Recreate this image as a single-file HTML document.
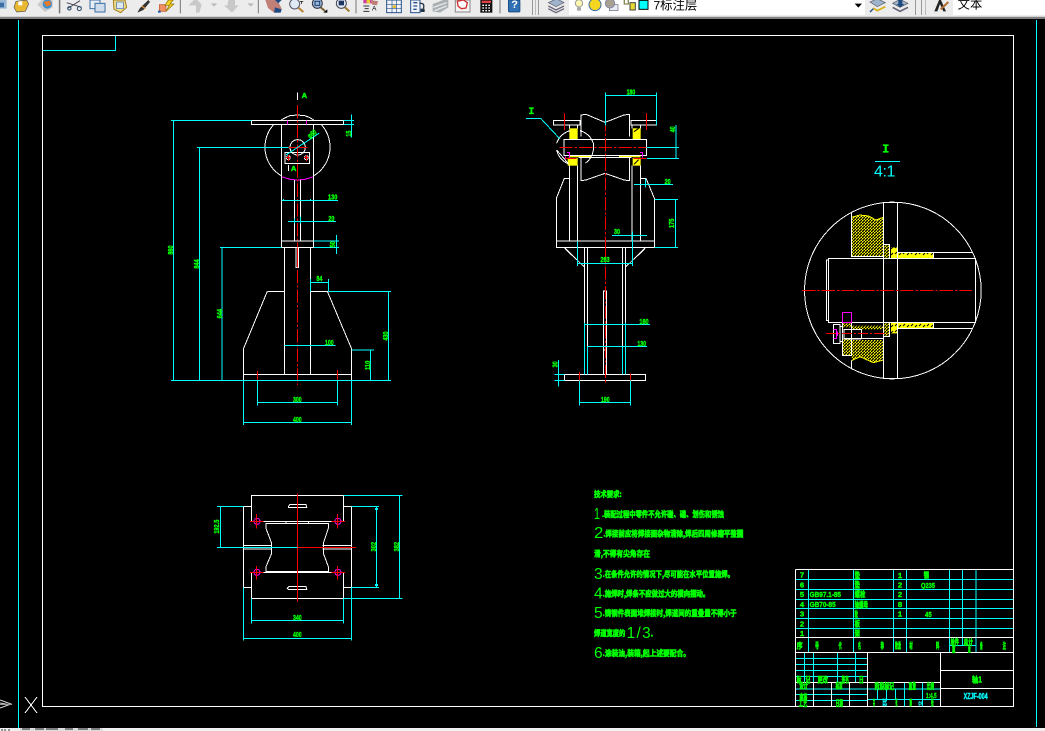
<!DOCTYPE html>
<html><head><meta charset="utf-8"><style>
html,body{margin:0;padding:0;background:#000;width:1045px;height:731px;overflow:hidden}
svg{position:absolute;left:0;top:0;display:block}
.l{fill:none;stroke-width:3;shape-rendering:crispEdges}
.w{stroke:#fff}.c{stroke:#0ff}.r{stroke:#f00}.m{stroke:#f0f}.y{stroke:#ff0}
.d{stroke-dasharray:40 6 7 6}
text{font-family:"Liberation Sans","Noto Sans CJK SC",sans-serif;font-weight:700;fill:#0f0;stroke:#0f0;stroke-width:1.2;font-size:23px;dominant-baseline:central;text-anchor:middle}
.cj{text-anchor:start;font-size:24px;stroke-width:1.8;font-family:"Noto Sans CJK SC","Liberation Sans",sans-serif}
.big{font-family:"Liberation Sans",sans-serif;font-weight:400;font-size:46px;text-anchor:start;stroke:none}
.tb{font-family:"Liberation Sans","Noto Sans CJK SC",sans-serif;font-weight:400;fill:#000;stroke:none;font-size:13px;text-anchor:start}
.ser{font-family:"Liberation Mono",monospace;stroke-width:.6}
</style></head><body>
<svg width="1045" height="731" viewBox="0 0 1045 731" xmlns="http://www.w3.org/2000/svg">
<defs>
<pattern id="h" patternUnits="userSpaceOnUse" width="9" height="9"><rect width="9" height="9" fill="#ff0"/><path d="M-2 11L11 -2" stroke="#000" stroke-width="4.5"/></pattern>
<pattern id="h2" patternUnits="userSpaceOnUse" width="24" height="18"><rect width="24" height="18" fill="#ff0"/><path d="M3 12L9 6M15 15L21 9" stroke="#000" stroke-width="3"/></pattern>
</defs>
<rect width="1045" height="731" fill="#000"/>

<!-- toolbar -->
<rect width="1045" height="16" fill="#ececec"/>
<rect y="16" width="1045" height="1" fill="#d4d4d4"/>
<rect y="17" width="1045" height="2" fill="#808080"/>
<g transform="scale(.33333)">
<rect x="0" y="0" width="20" height="26" fill="#9db8d6"/><rect x="0" y="8" width="12" height="14" fill="#3a6ea5"/>
<path d="M48 4L80 0L86 12L76 34L50 36L42 22Z" fill="#e8b830" stroke="#555" stroke-width="2"/><rect x="55" y="4" width="12" height="12" fill="#fff"/>
<path d="M112 14L135 36L158 22L158 0L125 0Z" fill="#c9c9c9"/><circle cx="142" cy="12" r="14" fill="#3a8fd0"/><path d="M130 6L150 2L154 14L140 20Z" fill="#e57a2a"/>
<path d="M200 8L245 22M205 24L240 2" stroke="#445" stroke-width="3"/><circle cx="208" cy="25" r="5" fill="none" stroke="#246" stroke-width="3"/><circle cx="238" cy="26" r="6" fill="none" stroke="#246" stroke-width="3"/>
<rect x="270" y="0" width="30" height="26" fill="#e8eef5" stroke="#3a6ea5" stroke-width="3"/><rect x="285" y="10" width="30" height="26" fill="#cfdcec" stroke="#3a6ea5" stroke-width="3"/>
<path d="M340 0H375L380 22L362 38L342 28Z" fill="#f1d98a" stroke="#a08020" stroke-width="3"/><rect x="350" y="6" width="20" height="20" fill="#dce7f3" stroke="#3a6ea5" stroke-width="2"/>
<path d="M445 0L420 24L412 38L430 30L450 6Z" fill="#333"/><path d="M425 18L436 26" stroke="#e0903a" stroke-width="4"/>
<rect x="478" y="14" width="20" height="20" fill="#f09060" stroke="#c05020" stroke-width="2"/><path d="M505 0L495 16H508L498 34L522 12H510L520 0Z" fill="#f2d020" stroke="#8a7000" stroke-width="2"/><rect x="474" y="32" width="8" height="6" fill="#1c5db0"/>
<path d="M582 0L565 16L588 16L588 38H598L605 14L592 0Z" fill="#c8c8c8"/><path d="M632 10H652L642 20Z" fill="#bbb"/>
<path d="M685 0L682 16L672 16L696 38L716 16L705 16L705 0Z" fill="#c8c8c8"/><path d="M742 10H762L752 20Z" fill="#bbb"/>
<path d="M796 0L832 0L845 26L840 38L822 38L804 24Z" fill="#c08078"/><path d="M825 22L845 28L842 38L822 38Z" fill="#1d4a80"/><path d="M825 0L845 0L835 10Z" fill="#1d4a80"/>
<circle cx="884" cy="12" r="15" fill="#dfe9f3" stroke="#556" stroke-width="3"/><path d="M895 23L910 36" stroke="#b88030" stroke-width="6"/><path d="M900 4L910 4M905 4V12" stroke="#000" stroke-width="2"/>
<circle cx="952" cy="10" r="15" fill="#9db8d6" stroke="#334" stroke-width="3"/><rect x="945" y="4" width="14" height="12" fill="none" stroke="#1c3c70" stroke-width="3"/><path d="M962 22L975 33" stroke="#7a6030" stroke-width="6"/><path d="M970 38L982 38L982 28Z" fill="#000"/>
<circle cx="1024" cy="10" r="15" fill="#dfe9f3" stroke="#445" stroke-width="3"/><rect x="1016" y="2" width="16" height="14" fill="#1d3560"/><path d="M1035 22L1048 34" stroke="#a07830" stroke-width="6"/>
<rect x="1090" y="0" width="28" height="10" fill="#d040a0"/><rect x="1100" y="0" width="10" height="10" fill="#e8d030"/><path d="M1112 0L1135 4L1130 16L1116 14Z" fill="#c08078"/><path d="M1090 18H1108M1094 26H1106M1090 34H1108" stroke="#333" stroke-width="3"/><text class="tb" x="1116" y="27" style="font-size:20px">A</text>
<rect x="1160" y="0" width="44" height="38" fill="#f0f4f8" stroke="#27518c" stroke-width="3"/><path d="M1176 0V38M1190 0V38M1160 14H1204M1160 26H1204" stroke="#27518c" stroke-width="2"/><rect x="1178" y="16" width="10" height="8" fill="#e8c030"/>
<rect x="1232" y="0" width="28" height="38" fill="#f0f4f8" stroke="#27518c" stroke-width="3"/><path d="M1240 8H1252M1240 18H1252M1240 28H1250" stroke="#27518c" stroke-width="4"/><path d="M1258 10Q1276 8 1270 26" fill="none" stroke="#234" stroke-width="4"/><rect x="1262" y="26" width="12" height="10" fill="#234"/>
<path d="M1298 12L1330 0L1345 0V22L1320 38L1298 34Z" fill="#a8b0b4"/><path d="M1300 22L1340 8M1304 32L1340 18" stroke="#e8e8e8" stroke-width="4"/>
<rect x="1366" y="0" width="44" height="36" fill="#f4f4f4" stroke="#888" stroke-width="3"/><path d="M1372 4L1390 0L1402 8L1398 24L1384 26L1374 18Z" fill="#fff" stroke="#d03030" stroke-width="4"/>
<rect x="1441" y="0" width="36" height="38" fill="#111"/><rect x="1445" y="2" width="28" height="7" fill="#e04040"/><path d="M1447 14h5v4h-5zM1456 14h5v4h-5zM1465 14h5v4h-5zM1447 22h5v4h-5zM1456 22h5v4h-5zM1465 22h5v4h-5zM1447 30h5v4h-5zM1456 30h5v4h-5zM1465 30h5v4h-5z" fill="#fff"/>
<rect x="1525" y="0" width="35" height="36" rx="3" fill="#2f6fb3" stroke="#123f78" stroke-width="2"/><text class="tb" x="1534" y="15" style="fill:#fff;font-size:32px;font-weight:700">?</text>
<path d="M178 0V40M179.500 0V40M541 0V40M775 0V40M1068 0V40M1500 0V40" stroke="#777" stroke-width="3"/>
</g>
<g>
<rect x="569" y="0" width="296" height="15" fill="#fff"/><rect x="953" y="0" width="92" height="15" fill="#fff"/>
<rect x="532" y="0" width="1" height="15" fill="#999"/><rect x="535" y="0" width="1" height="15" fill="#bbb"/><rect x="538" y="0" width="1" height="15" fill="#999"/>
<rect x="915" y="0" width="1" height="15" fill="#999"/><rect x="921" y="0" width="1" height="15" fill="#999"/><rect x="925" y="0" width="1" height="15" fill="#bbb"/>
</g>
<g transform="translate(520,0) scale(.33333)">
<path d="M85 8L110 -4L132 8L108 20Z" fill="#9db4cb" stroke="#556" stroke-width="2"/><path d="M85 18L108 30L132 18M85 26L108 38L132 26" fill="none" stroke="#667" stroke-width="4"/>
<circle cx="177" cy="10" r="11" fill="#fff8b0" stroke="#999" stroke-width="3"/><rect x="171" y="22" width="12" height="10" fill="#aaa"/>
<circle cx="225" cy="14" r="18" fill="#f4d520" stroke="#3a6ea5" stroke-width="3"/>
<rect x="268" y="14" width="26" height="18" fill="#e8eef5" stroke="#667" stroke-width="2"/><circle cx="270" cy="10" r="14" fill="#a8a090" stroke="#88a" stroke-width="3"/>
<rect x="330" y="8" width="16" height="22" fill="#e8d830" stroke="#444" stroke-width="3"/><path d="M313 0V12H325V0" fill="none" stroke="#885" stroke-width="4"/>
<rect x="357" y="1" width="27" height="27" fill="#0ff" stroke="#000" stroke-width="3"/>
<path d="M1004 11H1026L1015 23Z" fill="#000"/>
<path d="M1050 6L1072 -4L1096 8L1072 20Z" fill="#9db4cb" stroke="#556" stroke-width="2"/><path d="M1060 24L1072 32L1096 20" fill="none" stroke="#d4b010" stroke-width="5"/><path d="M1050 36L1060 26" stroke="#1d4a80" stroke-width="4"/>
<path d="M1118 10L1140 -2L1164 10L1140 22Z" fill="#9db4cb" stroke="#556" stroke-width="2"/><path d="M1118 22L1140 34L1164 22" fill="none" stroke="#667" stroke-width="5"/><path d="M1135 0H1147V12H1153L1141 22L1129 12H1135Z" fill="#1d4a80"/>
<path d="M1243 34L1258 -2H1262L1278 34H1270L1260 12L1252 34Z" fill="#222"/><path d="M1262 28L1285 6" stroke="#b07030" stroke-width="6"/>
<text class="tb" x="400" y="16" style="font-size:37px">7标注层</text>
<text class="tb" x="1313" y="14" style="font-size:37px">文本</text>
</g>

<!-- drawing frame -->
<path class="l c" style="stroke-width:1" d="M18.500 20V731M1036.500 20V727"/>
<path class="l w" style="stroke-width:1" d="M42.500 35.500H1013.500V706.500H42.500Z"/>
<path class="l c" style="stroke-width:1" d="M43 50.500H115.500V36"/>
<path class="l w" style="stroke-width:1" d="M25 713L37 697M25 697L37 713"/>
<path d="M0 700L11 704L0 708M0 703L8 704.500" fill="none" stroke="#ddd" stroke-width="1"/>
<rect x="0" y="704" width="12" height="1" fill="#999"/>
<rect x="0" y="728" width="1045" height="3" fill="#f0f0f0"/>
<rect x="20" y="728" width="83" height="3" fill="#ddd"/>
<path d="M22 729H30M35 729H44M46 729H58M65 729H73M78 729H88M91 729H100" stroke="#222" stroke-width="1"/>
<path d="M2 729V731M5 729V731M9 729V731" stroke="#333" stroke-width="1"/>

<!-- A: front view top (zoom coords) -->
<g transform="translate(160,85) scale(.33333)">
<rect class="l w" x="274" y="106" width="276" height="13"/>
<path class="l w" d="M363 105L378 97L390 92L412 90L434 92L448 97L461 105"/>
<path class="l w" d="M340 120A100 100 0 0 0 365 273M485 120A100 100 0 0 1 460 273"/>
<path class="l m" d="M365 275L390 283L412 285L435 283L460 275M382 106V119M439 106V119"/>
<path class="l w" d="M364 119V487M461 119V487M404 285V468M421 285V468M364 468H461M364 487H461"/>
<circle class="l w" cx="413" cy="187" r="23"/>
<rect class="l w" x="375" y="202" width="74" height="34"/>
<circle class="l w" cx="385" cy="218" r="6"/><circle class="l w" cx="439" cy="218" r="6"/>
<path class="l r" d="M385 210V228M439 210V228M378 218H392M432 218H446"/>
<path class="l w" d="M385 240V258M412 22V45"/>
<path class="l r" d="M385 187H442"/>
<path class="l r d" d="M412 60V540"/>
<path class="l c" d="M33 106H274M550 106H582M550 119H582M574 88V158M40 106V545M111 187H385M118 187V545M180 487H364M186 487V545M364 346H534M384 409H528M403 400V415M422 395V415M461 468H537M461 487H537M529 450V507M378 210L477 145M370 342V346M452 342V346"/>
<text x="518" y="336" textLength="28" lengthAdjust="spacingAndGlyphs">130</text>
<text x="514" y="401" textLength="18" lengthAdjust="spacingAndGlyphs">20</text>
<text x="566" y="146" textLength="18" lengthAdjust="spacingAndGlyphs" transform="rotate(-90 566 146)">15</text>
<text x="518" y="478" textLength="18" lengthAdjust="spacingAndGlyphs" transform="rotate(-90 518 478)">50</text>
<text x="32" y="495" textLength="28" lengthAdjust="spacingAndGlyphs" transform="rotate(-90 32 495)">860</text>
<text x="433" y="32">A</text>
<text x="401" y="251">A</text>
<text x="456" y="147" textLength="28" lengthAdjust="spacingAndGlyphs" transform="rotate(-35 456 147)">φ60</text>
</g>

<!-- B: front view bottom -->
<g transform="translate(160,250) scale(.33333)">
<path class="l w" d="M373 -8V373M451 -8V373M322 124H373M452 124H502M322 124L250 297V373M502 124L575 297V373"/>
<rect class="l w" x="250" y="373" width="325" height="18"/>
<rect class="l w" x="408" y="-8" width="8" height="61"/>
<path class="l r" d="M412 -8V53M292 363V391M532 360V391"/>
<path class="l r d" d="M412 60V405"/>
<path class="l c" d="M33 391H693M40 0V391M118 0V391M186 0V391M505 124H693M685 124V391M451 97H505M451 87V124M505 87V124M373 287H527M575 300H642M632 300V391M292 391V467M532 391V467M292 457H532M250 391V525M575 391V525M250 517H575"/>
<text x="478" y="86" textLength="18" lengthAdjust="spacingAndGlyphs">84</text>
<text x="508" y="278" textLength="26" lengthAdjust="spacingAndGlyphs">100</text>
<text x="623" y="346" textLength="28" lengthAdjust="spacingAndGlyphs" transform="rotate(-90 623 346)">110</text>
<text x="677" y="258" textLength="28" lengthAdjust="spacingAndGlyphs" transform="rotate(-90 677 258)">430</text>
<text x="412" y="449" textLength="26" lengthAdjust="spacingAndGlyphs">300</text>
<text x="412" y="509" textLength="26" lengthAdjust="spacingAndGlyphs">400</text>
<text x="110" y="42" textLength="28" lengthAdjust="spacingAndGlyphs" transform="rotate(-90 110 42)">844</text>
<text x="178" y="191" textLength="28" lengthAdjust="spacingAndGlyphs" transform="rotate(-90 178 191)">644</text>
</g>

<!-- C: side view top -->
<g transform="translate(520,85) scale(.33333)">
<rect x="148" y="130" width="25" height="32" fill="#ff0"/><rect x="338" y="130" width="24" height="32" fill="#ff0"/>
<rect x="143" y="218" width="30" height="24" fill="#ff0"/><rect x="338" y="218" width="24" height="24" fill="#ff0"/>
<path d="M342 140L356 130M342 238L356 224" stroke="#000" stroke-width="3"/>
<path class="l y" d="M150 215H215M297 215H362"/>
<rect class="l w" x="100" y="106" width="80" height="14"/><rect class="l w" x="333" y="106" width="77" height="14"/>
<path class="l w" d="M183 155V90L198 88L255 112L312 90L329 88V155M183 218V287L198 285L255 265L312 285L329 287V218"/>
<rect class="l w" x="132" y="163" width="248" height="49"/>
<path class="l w" d="M175 218H335"/>
<path class="l w" d="M148 120V130M173 120V130M336 120V130M362 120V130M148 242V468M173 242V468M336 242V468M362 242V468M148 280H133L109 340V487M362 280H378L403 340V487"/>
<rect class="l w" x="109" y="468" width="294" height="19"/>
<path class="l w" d="M135 490L155 510M375 490L355 510M194 487V510M203 487V510M307 487V510M317 487V510"/>
<path class="l w" d="M110 175A58 58 0 0 1 150 137M180 137A58 58 0 0 1 220 175V195A58 58 0 0 1 196 235M146 237A58 58 0 0 1 110 195Z"/>
<path class="l m" d="M141 202H149V218M360 202H368V218M136 215V224M141 220H150"/>
<path class="l r" d="M133 84V135M379 84V135M135 220H170M340 220H380"/>
<path class="l r d" d="M118 187H390"/>
<path class="l r d" d="M256 100V510"/>
<path class="l c" d="M18 100H62L120 162M256 22V122M409 22V120M256 31H409M380 187H477M381 220H477M468 120V220M342 298H459M376 282V308M403 343H474M466 343V488M403 487H474M276 451H381M172 468V510M337 440V510"/>
<text x="333" y="21" textLength="26" lengthAdjust="spacingAndGlyphs">180</text>
<text class="ser" x="34" y="80" style="font-size:30px;stroke-width:1">I</text>
<text x="458" y="133" textLength="18" lengthAdjust="spacingAndGlyphs" transform="rotate(-90 458 133)">40</text>
<text x="443" y="290" textLength="18" lengthAdjust="spacingAndGlyphs">20</text>
<text x="455" y="415" textLength="28" lengthAdjust="spacingAndGlyphs" transform="rotate(-90 455 415)">175</text>
<text x="291" y="440" textLength="18" lengthAdjust="spacingAndGlyphs">30</text>
</g>

<!-- D: side view bottom -->
<g transform="translate(540,240) scale(.33333)">
<path class="l w" d="M75 24L132 80M315 24L258 80M133 22V403M143 22V403M247 22V403M257 22V403"/>
<rect class="l w" x="190" y="153" width="10" height="250"/>
<path class="l w" d="M190 330H200"/>
<rect class="l w" x="73" y="403" width="244" height="19"/>
<path class="l r" d="M118 396V422M271 400V422"/>
<path class="l r d" d="M196 20V430"/>
<path class="l c" d="M112 70H278M112 22V78M278 22V78M133 247V403M257 247V403M133 253H330M143 319H321M143 319V403M247 319V403M118 422V497M271 422V497M118 487H271M55 360V440M44 403H73M44 422H73"/>
<text x="195" y="59" textLength="28" lengthAdjust="spacingAndGlyphs">263</text>
<text x="312" y="245" textLength="28" lengthAdjust="spacingAndGlyphs">160</text>
<text x="305" y="311" textLength="26" lengthAdjust="spacingAndGlyphs">130</text>
<text x="196" y="479" textLength="26" lengthAdjust="spacingAndGlyphs">190</text>
<text x="45" y="373" textLength="18" lengthAdjust="spacingAndGlyphs" transform="rotate(-90 45 373)">30</text>
</g>

<!-- E: detail -->
<g transform="translate(790,130) scale(.33333)">
<polygon points="184,262 210,255 235,258 258,270 280,262 280,380 184,380" fill="url(#h)"/>
<polygon points="185,630 280,630 280,690 250,698 210,680 185,692" fill="url(#h)"/>
<rect x="157" y="628" width="28" height="49" fill="url(#h)"/>
<rect x="157" y="578" width="28" height="14" fill="url(#h)"/>
<rect x="185" y="587" width="95" height="11" fill="url(#h)"/>
<path class="l y" d="M184 262L210 255L235 258L258 270L280 262M185 692L210 680L250 698L280 690"/>
<polygon points="303,352 322,352 322,368 430,368 430,385 303,385" fill="url(#h2)"/>
<polygon points="303,578 430,578 430,595 322,595 322,610 303,610" fill="url(#h2)"/>
<rect x="280" y="343" width="18" height="42" fill="url(#h)"/><rect x="280" y="578" width="18" height="42" fill="url(#h)"/>
<circle class="l w" cx="308.500" cy="481.500" r="265"/>
<rect class="l w" x="280" y="217" width="42" height="528"/>
<rect class="l w" x="280" y="343" width="18" height="42"/><rect class="l w" x="280" y="578" width="18" height="42"/>
<rect class="l w" x="115" y="385" width="441" height="193"/>
<path class="l w" d="M115 390H109V572H115M184 248V380H280M184 692V715M430 368V385M430 578V595M322 368H546M322 595H546M185 626H280"/>
<path class="l w" style="stroke-width:4" d="M162 627H215"/>
<rect class="l w" x="130" y="583" width="20" height="58"/><rect class="l w" x="157" y="578" width="28" height="99"/><rect class="l w" x="162" y="598" width="53" height="28"/>
<path class="l w" d="M150 590H157M150 635H157"/>
<rect class="l m" x="157" y="547" width="28" height="31"/>
<path class="l m" d="M130 599H140V625H130M142 604V618"/>
<path class="l r d" d="M36 481H546"/>
<path class="l r" style="stroke-dasharray:30 6 6 6" d="M108 610H290"/>
<path class="l c" d="M255 94H330"/>
<text class="ser" x="287" y="58" style="font-size:36px;stroke-width:1">I</text>
<text x="284" y="126" style="fill:#0ff;stroke:none;font-weight:400;font-size:48px" textLength="64" lengthAdjust="spacing">4:1</text>
</g>

<!-- F: plan view -->
<g transform="translate(200,480) scale(.33333)">
<path class="l w" d="M154 123V46H430V123M154 278V355H430V278M130 80V322M454 80V322M130 80H154M430 80H454M130 322H154M430 322H454M154 125H430M154 278H430M130 196H215M130 207H215M368 196H454M368 207H454"/>
<polygon class="l w" points="198,130 385,130 385,145 370,190 370,220 385,260 385,275 198,275 198,260 215,220 215,190 198,145"/>
<path class="l w" d="M258 125V130M326 125V130"/>
<rect x="258" y="274" width="68" height="5" fill="#fff"/>
<path class="l w" d="M265 80L270 73H318L320 82H265ZM262 325L268 319H318L320 328H265Z"/>
<circle class="l m" cx="171" cy="124" r="9"/><circle class="l m" cx="414" cy="124" r="9"/><circle class="l m" cx="171" cy="277" r="9"/><circle class="l m" cx="414" cy="277" r="9"/>
<path class="l r" d="M150 124H190M169 102V146M395 124H435M412 102V146M150 277H190M169 258V298M395 277H435M412 258V298M292 40V365M292 202H468"/>
<path class="l c" d="M51 79H130M61 79V202M51 202H292M430 46H608M599 46V355M430 355H608M454 80H537M529 80V322M454 322H537M155 355V430M430 355V430M155 421H430M130 322V482M454 322V482M130 475H454"/>
<rect x="525" y="84" width="9" height="6" fill="#0ff"/><rect x="525" y="312" width="9" height="6" fill="#0ff"/>
<text x="50" y="140" textLength="42" lengthAdjust="spacingAndGlyphs" transform="rotate(-90 50 140)">192.5</text>
<text x="521" y="200" textLength="28" lengthAdjust="spacingAndGlyphs" transform="rotate(-90 521 200)">302</text>
<text x="590" y="200" textLength="28" lengthAdjust="spacingAndGlyphs" transform="rotate(-90 590 200)">382</text>
<text x="292" y="412" textLength="26" lengthAdjust="spacingAndGlyphs">340</text>
<text x="292" y="463" textLength="26" lengthAdjust="spacingAndGlyphs">400</text>
</g>

<!-- G: notes -->
<g transform="translate(580,480) scale(.33333)">
<text class="cj" x="42" y="43" textLength="83" lengthAdjust="spacingAndGlyphs">技术要求:</text>
<text class="big" x="42" y="103" textLength="18" lengthAdjust="spacingAndGlyphs">1</text>
<text class="cj" x="66" y="103" textLength="366" lengthAdjust="spacingAndGlyphs">.装配过程中零件不允许碰、磕、划伤和锈蚀</text>
<text class="big" x="42" y="160" textLength="28" lengthAdjust="spacingAndGlyphs">2</text>
<text class="cj" x="70" y="162" textLength="420" lengthAdjust="spacingAndGlyphs">.焊接前应将焊接面杂物清除,焊后四周修磨平整圆</text>
<text class="cj" x="42" y="222" textLength="168" lengthAdjust="spacingAndGlyphs">滑,不得有尖角存在</text>
<text class="big" x="42" y="283" textLength="26" lengthAdjust="spacingAndGlyphs">3</text>
<text class="cj" x="68" y="283" textLength="394" lengthAdjust="spacingAndGlyphs">.在条件允许的情况下,尽可能在水平位置施焊。</text>
<text class="big" x="42" y="342" textLength="26" lengthAdjust="spacingAndGlyphs">4</text>
<text class="cj" x="68" y="342" textLength="320" lengthAdjust="spacingAndGlyphs">.施焊时,焊条不应做过大的横向摆动。</text>
<text class="big" x="42" y="400" textLength="26" lengthAdjust="spacingAndGlyphs">5</text>
<text class="cj" x="68" y="400" textLength="402" lengthAdjust="spacingAndGlyphs">.铸钢件表面堆焊接时,焊道间的重叠量不得小于</text>
<text class="cj" x="42" y="460" textLength="94" lengthAdjust="spacingAndGlyphs">焊道宽度的</text>
<text class="big" x="140" y="460" textLength="72" lengthAdjust="spacing">1/3</text>
<text class="cj" x="212" y="462">.</text>
<text class="big" x="42" y="520" textLength="26" lengthAdjust="spacingAndGlyphs">6</text>
<text class="cj" x="68" y="520" textLength="262" lengthAdjust="spacingAndGlyphs">.涂装油,装箱,起上述要配合。</text>
</g>

<!-- H: title block -->
<g transform="translate(790,565) scale(.33333)">
<path class="l c" d="M17 43H670M17 73H670M17 103H670M17 130H670M17 160H670M17 190H670M55 14V263M190 14V263M310 14V263M349 14V263M478 14V263M517 14V241M558 14V263M478 241H558"/>
<path class="l c" d="M17 280H232M17 298H232M17 316H232M17 334H232M17 372H232M17 388H232M17 406H232M232 372H451M232 403H451M262 372V403M289 372V403M316 372V403M343 352V425M397 352V425M43 263V352M70 263V425M142 263V352M196 263V352"/>
<path class="l w" d="M70 352V425M124 352V425M178 352V425M17 352H451"/>
<path class="l w" d="M17 14H670V425M17 14V425M17 217H670M17 263H670M232 263V425M451 263V425M451 316H670M451 370H670"/>
<g>
<text x="36" y="30">7</text><text x="36" y="60">6</text><text x="36" y="88">5</text><text x="36" y="118">4</text><text x="36" y="147">3</text><text x="36" y="177">2</text><text x="36" y="205">1</text>
<text x="106" y="88" textLength="94" lengthAdjust="spacingAndGlyphs">GB97.1-85</text>
<text x="98" y="118" textLength="78" lengthAdjust="spacingAndGlyphs">GB70-85</text>
<text class="cj" x="194" y="32" textLength="16" lengthAdjust="spacingAndGlyphs">垫</text>
<text class="cj" x="194" y="60" textLength="16" lengthAdjust="spacingAndGlyphs">垫</text>
<text class="cj" x="194" y="89" textLength="32" lengthAdjust="spacingAndGlyphs">螺栓</text>
<text class="cj" x="194" y="120" textLength="40" lengthAdjust="spacingAndGlyphs">轴螺母</text>
<text class="cj" x="194" y="148" textLength="10" lengthAdjust="spacingAndGlyphs">轮</text>
<text class="cj" x="194" y="177" textLength="16" lengthAdjust="spacingAndGlyphs">板</text>
<text class="cj" x="194" y="206" textLength="16" lengthAdjust="spacingAndGlyphs">架</text>
<text x="330" y="31">1</text><text x="330" y="60">2</text><text x="330" y="88">2</text><text x="330" y="118">8</text><text x="330" y="147">1</text>
<text class="cj" x="401" y="32" textLength="16" lengthAdjust="spacingAndGlyphs">钢</text>
<text x="414" y="61" textLength="42" lengthAdjust="spacingAndGlyphs">Q235</text>
<text x="415" y="148" textLength="20" lengthAdjust="spacingAndGlyphs">45</text>
<text class="cj" x="20" y="243" textLength="18" lengthAdjust="spacingAndGlyphs">序</text>
<text class="cj" x="75" y="243" textLength="12" lengthAdjust="spacingAndGlyphs">号</text>
<text class="cj" x="146" y="243" textLength="9" lengthAdjust="spacingAndGlyphs">代</text>
<text class="cj" x="204" y="243" textLength="9" lengthAdjust="spacingAndGlyphs">名</text>
<text class="cj" x="272" y="243" textLength="10" lengthAdjust="spacingAndGlyphs">称</text>
<text class="cj" x="315" y="243" textLength="18" lengthAdjust="spacingAndGlyphs">数量</text>
<text class="cj" x="358" y="243" textLength="10" lengthAdjust="spacingAndGlyphs">材</text>
<text class="cj" x="438" y="243" textLength="10" lengthAdjust="spacingAndGlyphs">料</text>
<text class="cj" x="481" y="232" textLength="26" lengthAdjust="spacingAndGlyphs">单件</text>
<text class="cj" x="521" y="232" textLength="28" lengthAdjust="spacingAndGlyphs">总计</text>
<text class="cj" x="486" y="253" textLength="10" lengthAdjust="spacingAndGlyphs">重</text>
<text class="cj" x="534" y="253" textLength="8" lengthAdjust="spacingAndGlyphs">量</text>
<text class="cj" x="570" y="243" textLength="8" lengthAdjust="spacingAndGlyphs">备</text>
<text class="cj" x="638" y="243" textLength="10" lengthAdjust="spacingAndGlyphs">注</text>
<text class="cj" x="20" y="345" textLength="14" lengthAdjust="spacingAndGlyphs">标</text>
<text class="cj" x="47" y="345" textLength="14" lengthAdjust="spacingAndGlyphs">记</text>
<text class="cj" x="82" y="345" textLength="32" lengthAdjust="spacingAndGlyphs">更改</text>
<text class="cj" x="155" y="345" textLength="22" lengthAdjust="spacingAndGlyphs">签名</text>
<text class="cj" x="207" y="345" textLength="14" lengthAdjust="spacingAndGlyphs">日</text>
<text class="cj" x="28" y="363" textLength="26" lengthAdjust="spacingAndGlyphs">设计</text>
<text class="cj" x="137" y="363" textLength="20" lengthAdjust="spacingAndGlyphs">标准</text>
<text class="cj" x="28" y="398" textLength="24" lengthAdjust="spacingAndGlyphs">审核</text>
<text class="cj" x="26" y="416" textLength="26" lengthAdjust="spacingAndGlyphs">工艺</text>
<text class="cj" x="137" y="416" textLength="22" lengthAdjust="spacingAndGlyphs">日期</text>
<text class="cj" x="254" y="364" textLength="58" lengthAdjust="spacingAndGlyphs">阶段标记</text>
<text class="cj" x="356" y="364" textLength="22" lengthAdjust="spacingAndGlyphs">重量</text>
<text class="cj" x="410" y="364" textLength="22" lengthAdjust="spacingAndGlyphs">比例</text>
<text class="cj" x="249" y="414" textLength="6" lengthAdjust="spacingAndGlyphs">共</text>
<text class="cj" x="316" y="414" textLength="6" lengthAdjust="spacingAndGlyphs">张</text>
<text class="cj" x="358" y="414" textLength="8" lengthAdjust="spacingAndGlyphs">第</text>
<text class="cj" x="423" y="414" textLength="8" lengthAdjust="spacingAndGlyphs">张</text>
<text x="424" y="391" textLength="32" lengthAdjust="spacingAndGlyphs">1:4.5</text>
<text x="284" y="413" style="fill:#0ff;stroke:#0ff" textLength="14" lengthAdjust="spacingAndGlyphs">比</text>
<text x="392" y="414" style="fill:#0ff;stroke:#0ff" textLength="14" lengthAdjust="spacingAndGlyphs">c+</text>
<text class="cj" x="546" y="345" textLength="30" lengthAdjust="spacingAndGlyphs">轴1</text>
<text x="557" y="394" style="fill:#0ff;stroke:#0ff;font-size:24px" textLength="72" lengthAdjust="spacingAndGlyphs">XZJF-004</text>
</g>
</g>
</svg>
</body></html>
